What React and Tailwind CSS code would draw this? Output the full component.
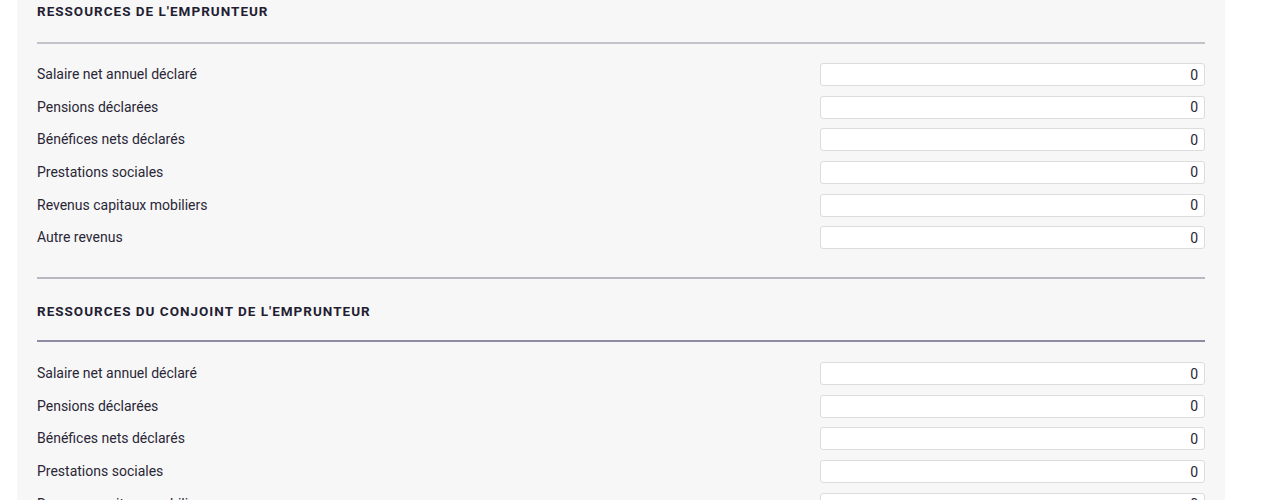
const fields = [
  "Salaire net annuel déclaré",
  "Pensions déclarées",
  "Bénéfices nets déclarés",
  "Prestations sociales",
  "Revenus capitaux mobiliers",
  "Autre revenus",
];

const Row = ({ label }) => (
  <div className="flex h-[32.6px] items-center justify-between">
    <span className="text-[14px] text-[#2a2636]">{label}</span>
    <input
      readOnly
      value="0"
      className="h-[23px] w-[385px] rounded-[3px] border border-[#dcdcdc] bg-white pr-[6px] text-right text-[14px] text-[#2a2636] outline-none"
    />
  </div>
);

export default function App() {
  return (
    <div className="h-[500px] overflow-hidden bg-white font-['Roboto',sans-serif]">
      <div className="ml-[17px] w-[1208px] bg-[#f7f7f7] px-5 pb-10">
        <h2 className="pt-[2px] text-[13.5px] font-bold leading-[18px] tracking-[1px] text-[#231d33]">
          RESSOURCES DE L'EMPRUNTEUR
        </h2>
        <div className="mt-[22px] h-[2px] bg-[#c4c2cb]" />
        <div className="mt-[14.4px]">
          {fields.map((f) => (
            <Row key={f} label={f} />
          ))}
        </div>
        <div className="mt-[23.5px] h-[2px] bg-[#b9b7c2]" />
        <h2 className="mt-[23px] text-[13.5px] font-bold leading-[18px] tracking-[1px] text-[#231d33]">
          RESSOURCES DU CONJOINT DE L'EMPRUNTEUR
        </h2>
        <div className="mt-[20px] h-[1.5px] bg-[#8f8ba3]" />
        <div className="mt-[15.5px]">
          {fields.map((f) => (
            <Row key={f + "2"} label={f} />
          ))}
        </div>
      </div>
    </div>
  );
}
